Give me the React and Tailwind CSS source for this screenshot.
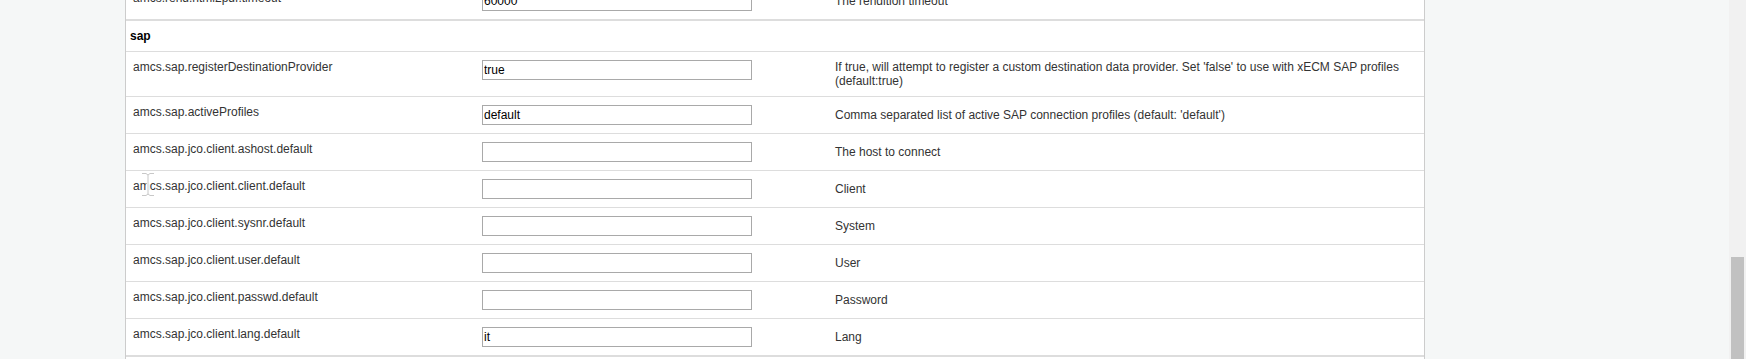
const rows = [
  {
    key: "amcs.sap.registerDestinationProvider",
    value: "true",
    desc: "If true, will attempt to register a custom destination data provider. Set 'false' to use with xECM SAP profiles (default:true)",
  },
  {
    key: "amcs.sap.activeProfiles",
    value: "default",
    desc: "Comma separated list of active SAP connection profiles (default: 'default')",
  },
  { key: "amcs.sap.jco.client.ashost.default", value: "", desc: "The host to connect" },
  { key: "amcs.sap.jco.client.client.default", value: "", desc: "Client", cursor: true },
  { key: "amcs.sap.jco.client.sysnr.default", value: "", desc: "System" },
  { key: "amcs.sap.jco.client.user.default", value: "", desc: "User" },
  { key: "amcs.sap.jco.client.passwd.default", value: "", desc: "Password" },
  { key: "amcs.sap.jco.client.lang.default", value: "it", desc: "Lang" },
];

function TextCursor() {
  return (
    <svg className="absolute left-[15px] top-[1px]" width="14" height="25" viewBox="0 0 14 25">
      <path d="M1 1.5h4l2 1.5 2-1.5h4M7 3v19M1 23.5h4l2-1.5 2 1.5h4" fill="none" stroke="#fff" strokeWidth="3" />
      <path d="M1 1.5h4l2 1.5 2-1.5h4M7 3v19M1 23.5h4l2-1.5 2 1.5h4" fill="none" stroke="#c8c8c8" strokeWidth="1" />
    </svg>
  );
}

function PropRow({ row }) {
  const [val, setVal] = React.useState(row.value);
  return (
    <div className="grid grid-cols-[348px_353px_1fr] border-t border-[#dddddd]">
      <div className="relative self-start pl-[7px] pr-2 py-2 text-[#333]">
        {row.key}
        {row.cursor && <TextCursor />}
      </div>
      <div className="px-2 py-2">
        <input
          value={val}
          onChange={(e) => setVal(e.target.value)}
          className="block w-[270px] h-[20px] border border-[#a9a9a9] bg-white px-[1px] text-[12px] leading-[14px] text-black outline-none"
        />
      </div>
      <div className="self-center px-2 py-2 text-[#333]">{row.desc}</div>
    </div>
  );
}

import React from "react";

export default function App() {
  return (
    <div
      className="flex h-[359px] w-[1746px] overflow-hidden bg-[#f5f7f7] text-[12px] leading-[14px]"
      style={{ fontFamily: '"Liberation Sans", Arial, sans-serif' }}
    >
      <div className="w-[125px] shrink-0" />
      <div className="w-[1300px] shrink-0 bg-white border-x border-[#cccccc]">
        <div className="mt-[-18px] border-b-2 border-[#dddddd]">
          <PropRow row={{ key: "amcs.rend.html2pdf.timeout", value: "60000", desc: "The rendition timeout" }} />
        </div>
        <div className="border-b-2 border-[#dddddd]">
          <div className="pl-[4px] py-2 font-bold text-black">sap</div>
          {rows.map((r) => (
            <PropRow key={r.key} row={r} />
          ))}
        </div>
        <div className="h-[20px]" />
      </div>
      <div className="flex-1" />
      <div className="w-[17px] shrink-0 bg-[#f1f1f1]">
        <div className="mt-[257px] mx-[2px] h-[110px] bg-[#c1c1c1]" />
      </div>
    </div>
  );
}
